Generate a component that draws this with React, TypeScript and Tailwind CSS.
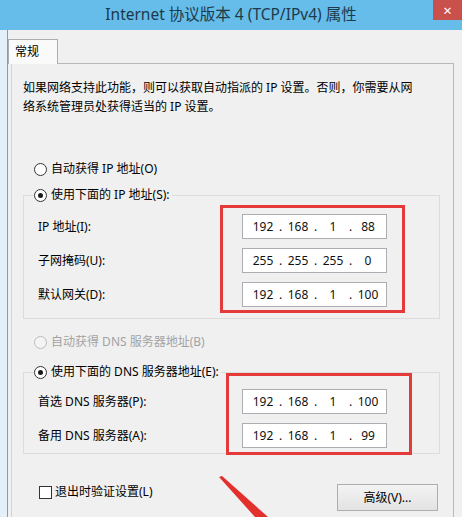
import React from "react";

function Radio({ checked, disabled }: { checked?: boolean; disabled?: boolean }) {
  return (
    <span
      className={
        "w-[13px] h-[13px] rounded-full border flex items-center justify-center shrink-0 " +
        (disabled ? "border-[#bcbcbc] bg-[#f4f4f4]" : "border-[#333333] bg-white")
      }
    >
      {checked ? <span className="w-[5px] h-[5px] rounded-full bg-[#1a1a1a]" /> : null}
    </span>
  );
}

function IpBox({ parts }: { parts: string[] }) {
  return (
    <div className="w-[145px] h-[25px] border border-[#abadb3] bg-white flex items-center pl-[6px] text-[12px] text-[#111]">
      <span className="w-[28px] text-center">{parts[0]}</span>
      <span className="w-[7px] text-center">.</span>
      <span className="w-[28px] text-center">{parts[1]}</span>
      <span className="w-[7px] text-center">.</span>
      <span className="w-[28px] text-center">{parts[2]}</span>
      <span className="w-[7px] text-center">.</span>
      <span className="w-[28px] text-center">{parts[3]}</span>
    </div>
  );
}

function Row({ label, parts }: { label: string; parts: string[] }) {
  return (
    <div className="flex items-center h-[25px]">
      <span className="w-[204px]">{label}</span>
      <IpBox parts={parts} />
    </div>
  );
}

export default function App() {
  return (
    <div className="relative w-[462px] h-[517px] overflow-hidden bg-[#f0f0f0] text-[12px] text-black font-['Noto_Sans','Noto_Sans_CJK_SC',sans-serif]">
      {/* title bar */}
      <div className="relative h-[30px] bg-[#66bde9] flex items-center justify-center text-[15.5px] text-[#1d3a4c]">
        <span>Internet 协议版本 4 (TCP/IPv4) 属性</span>
        <div className="absolute right-0 top-0 w-[29px] h-[20px] bg-[#c9504b] flex items-center justify-center text-white text-[15px] leading-none">
          ×
        </div>
      </div>

      <div className="flex h-[487px]">
        <div className="w-[7px] bg-[#e3f0f9]" />
        <div className="w-px bg-[#8f9aa3]" />
        <div className="flex-1 flex flex-col pt-[9px]">
          {/* tab */}
          <div className="relative z-10 w-[50px] h-[25px] -mb-px border border-b-0 border-[#adadad] bg-[#fafafa] pl-[6px] flex items-center">
            常规
          </div>
          {/* panel */}
          <div className="ml-[3px] mr-[8px] flex-1 border border-b-0 border-[#b9b9b9] border-l-[#d4d4d4] pl-[11px] pr-[13px] pt-[14px]">
            <p className="leading-[19px]">
              如果网络支持此功能，则可以获取自动指派的 IP 设置。否则，你需要从网
              <br />
              络系统管理员处获得适当的 IP 设置。
            </p>

            <div className="mt-[43px] h-[20px] flex items-center pl-[11px] gap-[4px]">
              <Radio />
              <span>自动获得 IP 地址(O)</span>
            </div>

            <fieldset className="mt-[6px] border border-[#dcdcdc] pl-[10px] pb-[11px]">
              <legend className="pr-[2px]">
                <span className="h-[20px] flex items-center gap-[4px]">
                  <Radio checked />
                  <span>使用下面的 IP 地址(S):</span>
                </span>
              </legend>
              <div className="relative pt-[9px] pl-[4px] flex flex-col gap-[9px]">
                <Row label="IP 地址(I):" parts={["192", "168", "1", "88"]} />
                <Row label="子网掩码(U):" parts={["255", "255", "255", "0"]} />
                <Row label="默认网关(D):" parts={["192", "168", "1", "100"]} />
                <div className="absolute left-[186px] top-0 w-[185px] h-[108px] border-[3px] border-[#e53a3a]" />
              </div>
            </fieldset>

            <div className="mt-[13px] h-[20px] flex items-center pl-[11px] gap-[4px] text-[#a3a3a3]">
              <Radio disabled />
              <span>自动获得 DNS 服务器地址(B)</span>
            </div>

            <fieldset className="mt-[10px] border border-[#dcdcdc] pl-[10px] pb-[5px]">
              <legend className="pr-[2px]">
                <span className="h-[20px] flex items-center gap-[4px]">
                  <Radio checked />
                  <span>使用下面的 DNS 服务器地址(E):</span>
                </span>
              </legend>
              <div className="relative pt-[7px] pl-[4px] flex flex-col gap-[9px]">
                <Row label="首选 DNS 服务器(P):" parts={["192", "168", "1", "100"]} />
                <Row label="备用 DNS 服务器(A):" parts={["192", "168", "1", "99"]} />
                <div className="absolute left-[192px] top-[-9px] w-[186px] h-[82px] border-[3px] border-[#e53a3a]" />
              </div>
            </fieldset>

            <div className="mt-[28px] flex items-start justify-between">
              <div className="pl-[16px] h-[20px] flex items-center gap-[3px]">
                <span className="w-[13px] h-[13px] border border-[#333333] bg-white shrink-0" />
                <span>退出时验证设置(L)</span>
              </div>
              <div className="mt-[2px] mr-[2px] w-[101px] h-[27px] border border-[#adadad] bg-gradient-to-b from-[#f3f3f3] to-[#e3e3e3] flex items-center justify-center">
                高级(V)...
              </div>
            </div>
          </div>
        </div>
      </div>

      {/* red annotation arrow */}
      <svg
        className="absolute left-0 top-0 pointer-events-none"
        width="462"
        height="517"
        viewBox="0 0 462 517"
      >
        <polygon points="219,477 222,476 268,517 255,517" fill="#e3302c" />
      </svg>
    </div>
  );
}
